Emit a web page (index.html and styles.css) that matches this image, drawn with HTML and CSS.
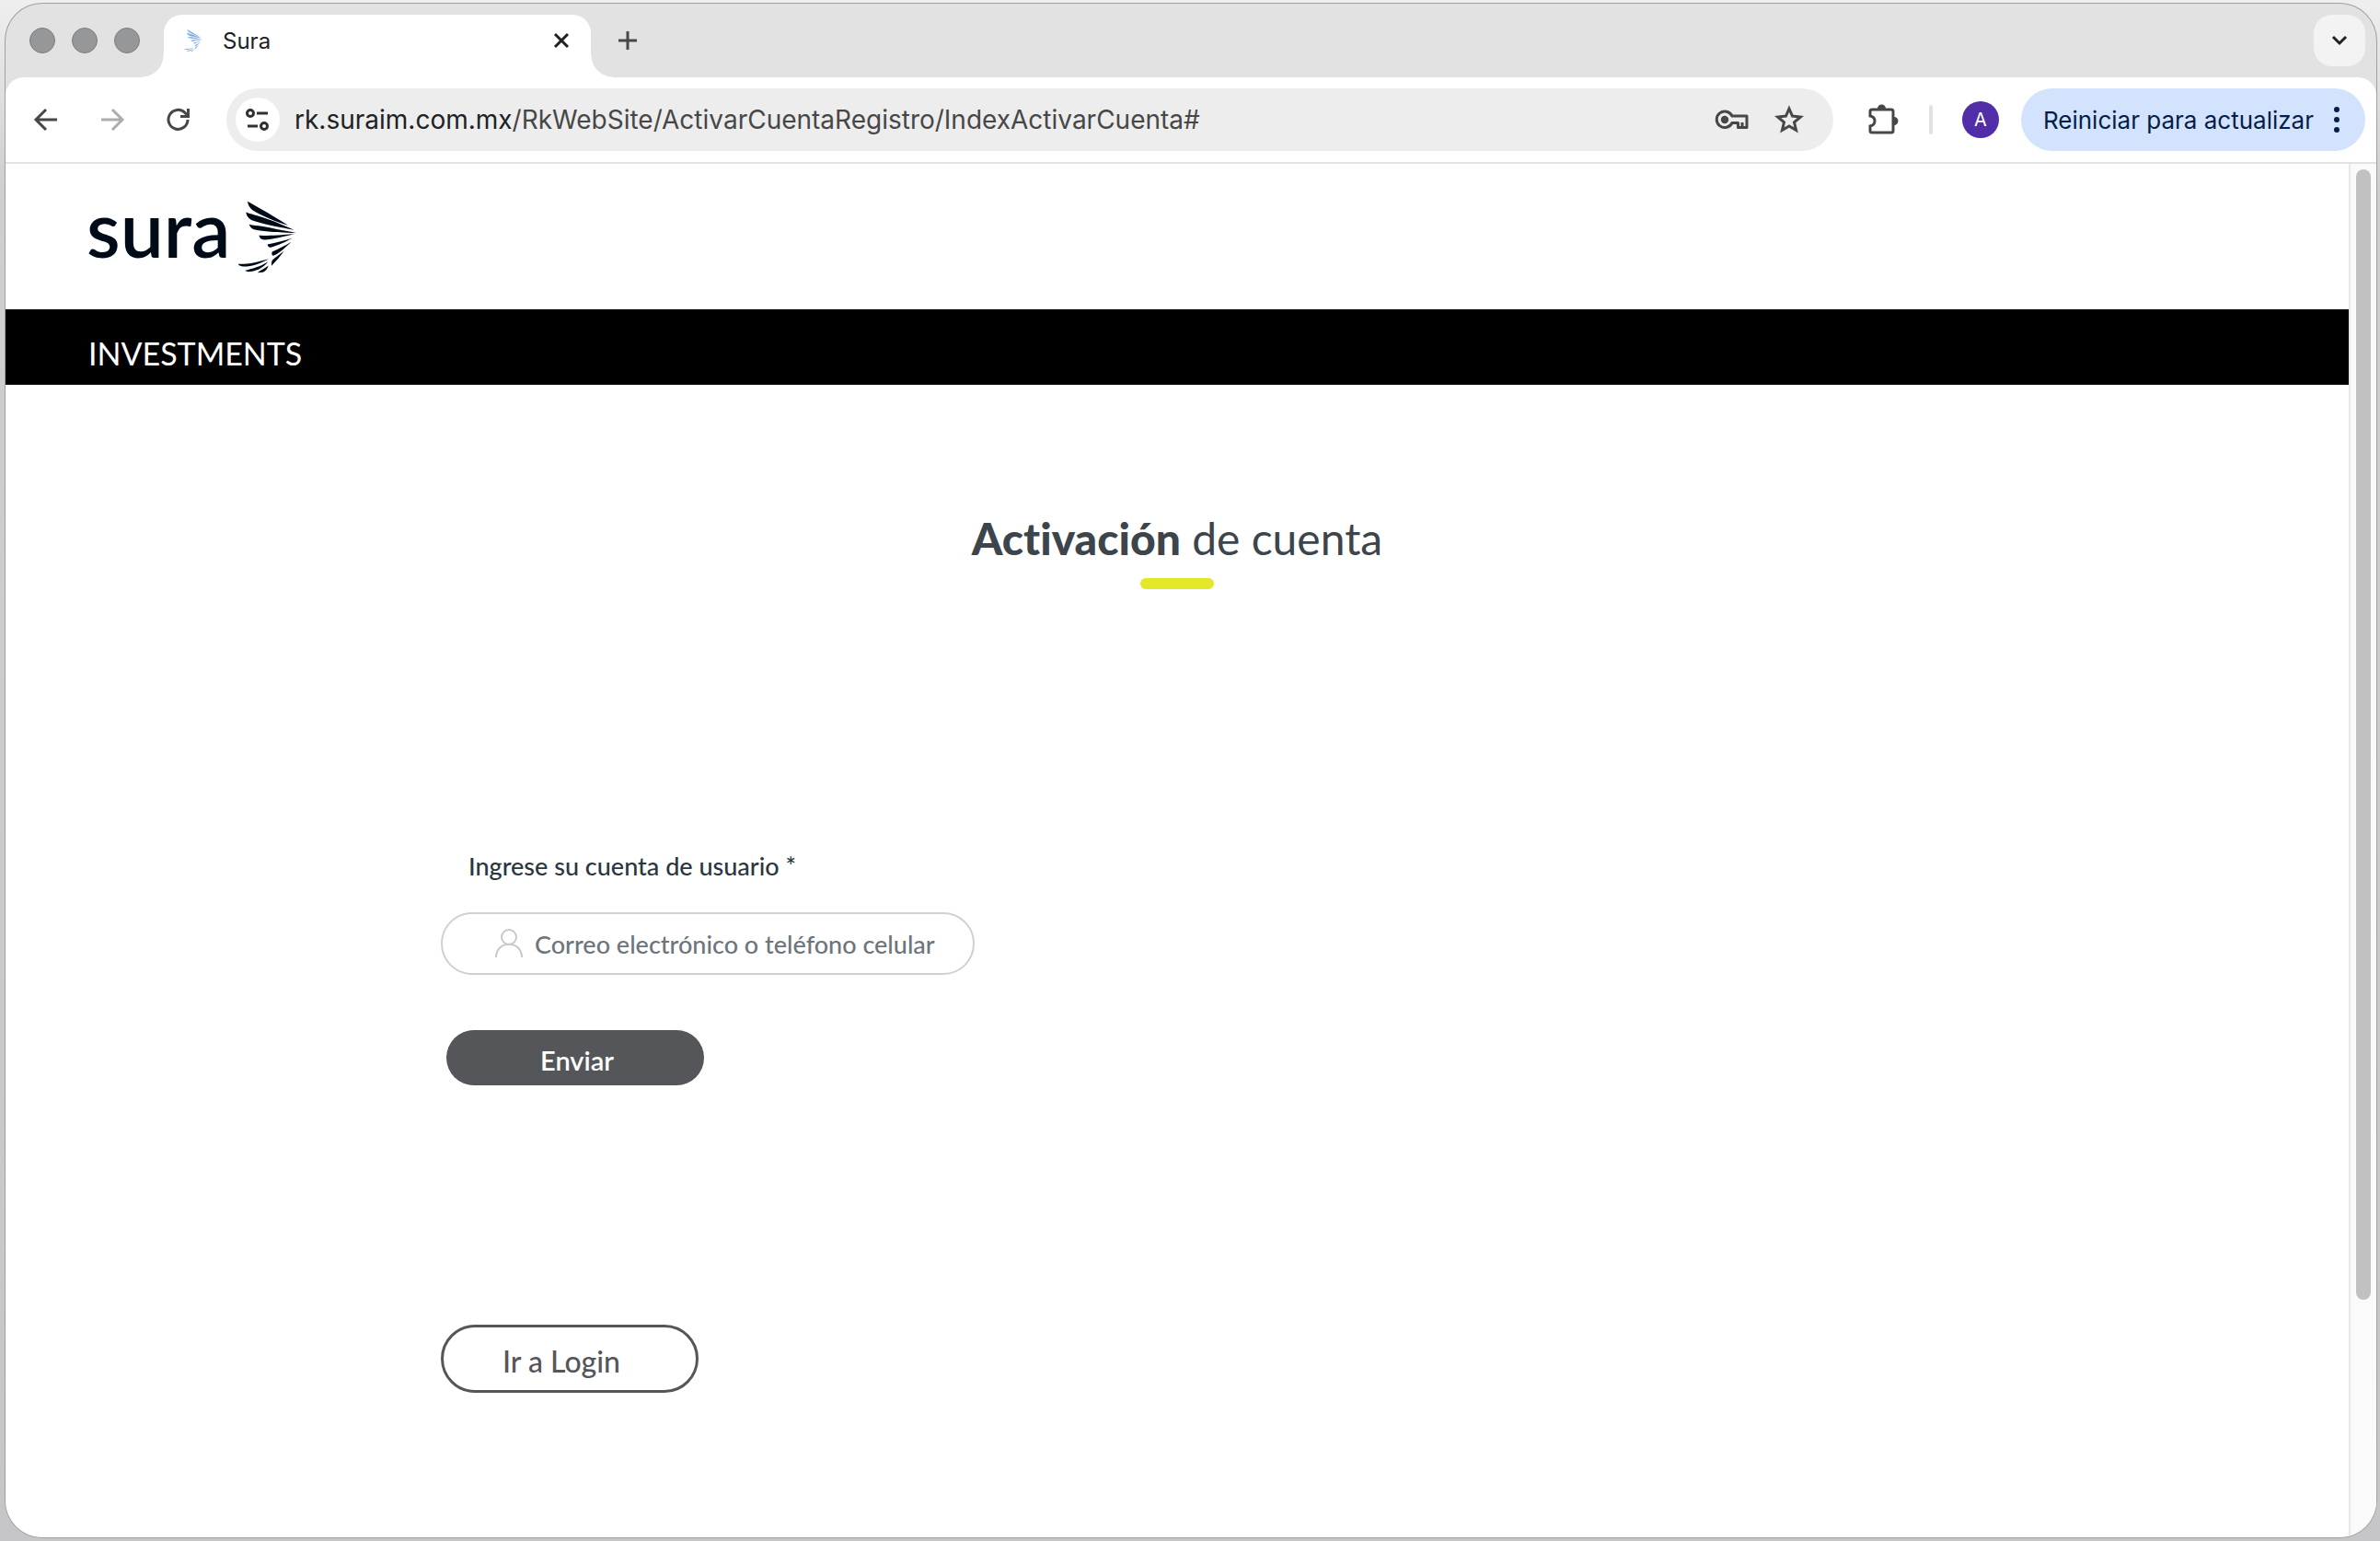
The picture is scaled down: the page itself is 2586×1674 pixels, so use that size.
FILE: index.html
```html
<!DOCTYPE html>
<html lang="es">
<head>
    <meta charset="UTF-8">
    <meta name="viewport" content="width=device-width, initial-scale=1.0">
    <title>Sura</title>
    <link rel="stylesheet" href="styles.css">
</head>
<body>
    <!-- Pluma del logo, usada en la pestaña y en el encabezado -->
    <svg class="sprite" aria-hidden="true">
        <symbol id="bird" viewBox="54 24 192 236">
            <path d="M87 26 C120 45 180 78 219 104 C180 92 130 72 103 54 C94 47 88 38 87 26Z"/>
            <path d="M82 61 C95 66 107 69 118 72 C150 81 195 98 238 119 C195 110 140 101 103 88 C90 82 84 74 82 61Z"/>
            <path d="M92 101 C105 105 119 105 133 107 C165 113 205 121 246 128 C205 129 150 126 115 119 C102 117 96 111 92 101Z"/>
            <path d="M124 137 C150 138 200 136 243 131 C205 141 170 149 142 151 C131 151 127 146 124 137Z"/>
            <path d="M152 166 C180 161 210 153 234 145 C210 158 185 170 165 175 C156 177 153 173 152 166Z"/>
            <path d="M167 190 C190 180 210 170 229 158 C212 176 193 192 178 200 C167 206 164 200 167 190Z"/>
            <path d="M165 236 C165 222 166 217 174 212 L206 187 C194 205 180 220 165 236Z"/>
            <path d="M56 230 C90 231 125 222 156 213 C130 228 100 239 71 238 C63 237 58 234 56 230Z"/>
            <path d="M79 251 C100 245 130 238 154 222 C138 243 112 255 89 255 C83 254 80 253 79 251Z"/>
            <path d="M119 258 C132 249 144 243 155 235 C151 247 145 254 137 257Z"/>
        </symbol>
    </svg>

    <div class="window">
        <div class="tab-strip">
            <div class="lights">
                <span class="light"></span>
                <span class="light"></span>
                <span class="light"></span>
            </div>
            <div class="tab">
                <svg class="favicon"><use href="#bird"/></svg>
                <span class="tab-title">Sura</span>
                <button class="icon-btn" type="button" aria-label="Cerrar pestaña">
                    <svg width="20" height="20" viewBox="0 0 20 20"><path d="M3 3 L17 17 M17 3 L3 17" stroke="#202124" stroke-width="3"/></svg>
                </button>
            </div>
            <button class="icon-btn new-tab" type="button" aria-label="Nueva pestaña">
                <svg width="24" height="24" viewBox="0 0 24 24"><path d="M12 2 V22 M2 12 H22" stroke="#474747" stroke-width="3"/></svg>
            </button>
            <button class="icon-btn tab-search" type="button" aria-label="Buscar pestañas">
                <svg width="20" height="20" viewBox="0 0 20 20"><path d="M3 6 L10 13 L17 6" fill="none" stroke="#202124" stroke-width="3"/></svg>
            </button>
        </div>

        <div class="toolbar">
            <div class="nav">
                <button class="icon-btn" type="button" aria-label="Atrás">
                    <svg width="28" height="28" viewBox="0 0 28 28"><path d="M26 14 H4 M14 3 L3 14 L14 25" fill="none" stroke="#474747" stroke-width="3"/></svg>
                </button>
                <button class="icon-btn" type="button" aria-label="Adelante">
                    <svg width="28" height="28" viewBox="0 0 28 28"><path d="M2 14 H24 M14 3 L25 14 L14 25" fill="none" stroke="#adadad" stroke-width="3"/></svg>
                </button>
                <button class="icon-btn" type="button" aria-label="Recargar">
                    <svg width="28" height="28" viewBox="0 0 28 28"><path d="M24 14 A10.500 10.500 0 1 1 21 6.500 L24 10 M24.500 2 V10.500 H16" fill="none" stroke="#474747" stroke-width="3"/></svg>
                </button>
            </div>
            <div class="address">
                <button class="icon-btn site-info" type="button" aria-label="Información del sitio">
                    <svg width="28" height="32" viewBox="0 0 28 32" fill="none" stroke="#303134" stroke-width="3"><circle cx="6" cy="9" r="3.500"/><path d="M13 9 H25 M3 23 H14"/><circle cx="21" cy="23" r="3.500"/></svg>
                </button>
                <span class="url"><span class="host">rk.suraim.com.mx</span>/RkWebSite/ActivarCuentaRegistro/IndexActivarCuenta#</span>
                <button class="icon-btn" type="button" aria-label="Contraseñas">
                    <svg width="38" height="24" viewBox="0 0 38 24"><path d="M20 8 H36 V20.500 H26.500 V15.500 H20 A8.800 8.800 0 1 1 20 8Z M31 20 V15" fill="none" stroke="#474747" stroke-width="3" stroke-linejoin="round"/><circle cx="12" cy="12" r="4.200" fill="#474747"/></svg>
                </button>
                <button class="icon-btn" type="button" aria-label="Agregar a favoritos">
                    <svg width="32" height="32" viewBox="0 0 32 32"><path d="M16 4 L19.500 12 L28.500 13 L21.500 18.800 L23.600 27.500 L16 23 L8.400 27.500 L10.500 18.800 L3.500 13 L12.500 12Z" fill="none" stroke="#474747" stroke-width="3"/></svg>
                </button>
            </div>
            <button class="icon-btn extensions" type="button" aria-label="Extensiones">
                <svg width="36" height="36" viewBox="0 0 36 36"><path d="M4 9 Q4 7 6 7 H27 Q29 7 29 9 V30 Q29 32 27 32 H6 Q4 32 4 30 V25 Q9 24 9 19.500 Q9 15 4 14Z" fill="none" stroke="#474747" stroke-width="3"/><path d="M12 6 A4.500 4.500 0 0 1 21 6Z M30 15 A4.500 4.500 0 0 1 30 24Z" fill="#474747"/></svg>
            </button>
            <span class="divider"></span>
            <button class="avatar" type="button">A</button>
            <button class="update" type="button">
                Reiniciar para actualizar
                <svg width="6" height="30" viewBox="0 0 6 30" fill="#041e49"><circle cx="3" cy="4" r="3"/><circle cx="3" cy="15" r="3"/><circle cx="3" cy="26" r="3"/></svg>
            </button>
        </div>

        <div class="viewport">
            <div class="page">
                <header class="header">
                    <a class="logo" href="#" aria-label="Sura">
                        <span class="wordmark">sura</span>
                        <svg class="bird"><use href="#bird"/></svg>
                    </a>
                </header>
                <div class="brand-bar">INVESTMENTS</div>

                <main class="content">
                    <h1 class="title"><strong>Activación</strong> de cuenta</h1>
                    <form class="form">
                        <label class="label" for="cuenta">Ingrese su cuenta de usuario *</label>
                        <div class="field">
                            <svg width="32" height="32" viewBox="0 0 32 32" fill="none" stroke="#c8c8c8" stroke-width="2"><circle cx="16" cy="9" r="8"/><path d="M2 31 C2 12 30 12 30 31"/></svg>
                            <input id="cuenta" type="text" placeholder="Correo electrónico o teléfono celular">
                        </div>
                        <button class="submit" type="button">Enviar</button>
                        <a class="login" href="#">Ir a Login</a>
                    </form>
                </main>
            </div>
            <div class="scrollbar"><span class="thumb"></span></div>
        </div>
    </div>
</body>
</html>
```
FILE: styles.css
```css
* {
    box-sizing: border-box;
}
body {
    margin: 0;
    padding: 4px 4px 4px 6px;
    height: 100vh;
    background: linear-gradient(#efefef, #cfcfd1 12%, #c6c6c8);
    font-family: Lato, sans-serif;
    font-variant-ligatures: none;
}
button {
    border: none;
    background: none;
    padding: 0;
    font-family: inherit;
    cursor: pointer;
}
a {
    text-decoration: none;
}
svg {
    display: block;
    flex-shrink: 0;
}
.sprite {
    position: absolute;
    width: 0;
    height: 0;
}
.window {
    display: flex;
    flex-direction: column;
    height: 100%;
    border-radius: 40px;
    overflow: hidden;
    background: #e2e2e2;
    box-shadow: 0 0 0 1px #a0a0a0;
}

/* Barra de pestañas */
.tab-strip {
    display: flex;
    align-items: center;
    height: 80px;
    padding: 0 12px 0 26px;
    font-family: Inter, sans-serif;
}
.lights {
    display: flex;
    gap: 18px;
    margin-right: 26px;
}
.light {
    width: 28px;
    height: 28px;
    border-radius: 50%;
    background: #969798;
    border: 1px solid #7c7d7f;
}
.tab {
    position: relative;
    align-self: flex-end;
    display: flex;
    align-items: center;
    width: 464px;
    height: 68px;
    padding: 0 22px 12px;
    border-radius: 20px 20px 0 0;
    background: #fff;
}
.tab::before,
.tab::after {
    content: "";
    position: absolute;
    bottom: 0;
    width: 24px;
    height: 24px;
}
.tab::before {
    left: -24px;
    background: radial-gradient(circle at 0 0, transparent 23px, #fff 24px);
}
.tab::after {
    right: -24px;
    background: radial-gradient(circle at 100% 0, transparent 23px, #fff 24px);
}
.favicon {
    width: 20px;
    height: 26px;
    fill: #7fb2e0;
}
.tab-title {
    flex: 1;
    margin-left: 22px;
    font-size: 24px;
    color: #202124;
}
.icon-btn {
    display: flex;
    align-items: center;
    justify-content: center;
}
.new-tab {
    margin-left: 28px;
}
.tab-search {
    width: 56px;
    height: 56px;
    margin-left: auto;
    border-radius: 20px;
    background: #f3f3f3;
}

/* Barra de herramientas */
.toolbar {
    display: flex;
    align-items: center;
    height: 94px;
    padding: 0 12px 0 30px;
    border-radius: 20px 20px 0 0;
    border-bottom: 2px solid #e2e2e2;
    background: #fff;
    font-family: Inter, sans-serif;
}
.nav {
    display: flex;
    gap: 44px;
    margin-right: 38px;
}
.address {
    flex: 1;
    display: flex;
    align-items: center;
    gap: 28px;
    height: 68px;
    padding: 0 32px 0 10px;
    border-radius: 34px;
    background: #ededed;
}
.site-info {
    width: 48px;
    height: 48px;
    border-radius: 50%;
    background: #fff;
}
.url {
    flex: 1;
    margin-left: -12px;
    font-size: 28px;
    color: #474747;
}
.host {
    color: #202124;
}
.extensions {
    margin: 0 32px 0 36px;
}
.divider {
    width: 4px;
    height: 32px;
    border-radius: 2px;
    background: #e2e2e2;
}
.avatar {
    width: 40px;
    height: 40px;
    margin: 0 24px 0 32px;
    border-radius: 50%;
    background: #512da8;
    color: #fff;
    font-size: 20px;
}
.update {
    display: flex;
    align-items: center;
    gap: 22px;
    height: 68px;
    padding: 0 28px 0 24px;
    border-radius: 34px;
    background: #d3e3fd;
    color: #041e49;
    font-size: 26px;
}

/* Página */
.viewport {
    flex: 1;
    display: flex;
    background: #fff;
}
.page {
    flex: 1;
}
.scrollbar {
    width: 30px;
    padding: 6px;
    border-left: 2px solid #e8e8e8;
    background: #fafafa;
}
.thumb {
    display: block;
    width: 16px;
    height: 83%;
    border-radius: 8px;
    background: #c1c1c1;
}
.header {
    height: 158px;
    padding: 40px 88px;
}
.logo {
    display: flex;
    gap: 8px;
    color: #000b18;
}
.wordmark {
    font-size: 84px;
    font-weight: 600;
    line-height: 60px;
}
.bird {
    width: 64px;
    height: 79px;
    fill: #000b18;
}
.brand-bar {
    height: 82px;
    padding: 14px 90px 0;
    background: #000;
    color: #fff;
    font-size: 34px;
    line-height: 68px;
}
.content {
    max-width: 1600px;
    margin: 0 auto;
    padding-top: 135px;
}
.title {
    margin: 0;
    color: #3c444c;
    font-size: 48px;
    font-weight: 400;
    line-height: 64px;
    text-align: center;
}
.title strong {
    font-weight: 900;
}
.title::after {
    content: "";
    display: block;
    width: 80px;
    height: 12px;
    margin: 11px auto 0;
    border-radius: 6px;
    background: #e3e829;
}
.form {
    display: flex;
    flex-direction: column;
    align-items: flex-start;
    margin-top: 283px;
}
.label {
    margin-left: 30px;
    color: #2b3641;
    font-size: 27px;
    font-weight: 500;
    line-height: 36px;
}
.field {
    display: flex;
    align-items: center;
    gap: 12px;
    width: 580px;
    height: 68px;
    margin-top: 32px;
    padding: 0 32px 0 56px;
    border: 2px solid #d0d0d0;
    border-radius: 34px;
}
.field input {
    flex: 1;
    min-width: 0;
    border: none;
    outline: none;
    padding: 0;
    background: none;
    font-family: inherit;
    font-size: 27px;
    font-weight: 500;
}
.field input::placeholder {
    color: #6c757d;
}
.submit {
    width: 280px;
    height: 60px;
    margin: 60px 0 0 6px;
    padding: 4px 0 0 4px;
    border-radius: 30px;
    background: #55565a;
    color: #fff;
    font-size: 29px;
    font-weight: 600;
}
.login {
    width: 280px;
    height: 74px;
    margin-top: 260px;
    padding-left: 64px;
    border: 3px solid #55565a;
    border-radius: 37px;
    color: #55565a;
    font-size: 32px;
    font-weight: 500;
    line-height: 74px;
}
```
